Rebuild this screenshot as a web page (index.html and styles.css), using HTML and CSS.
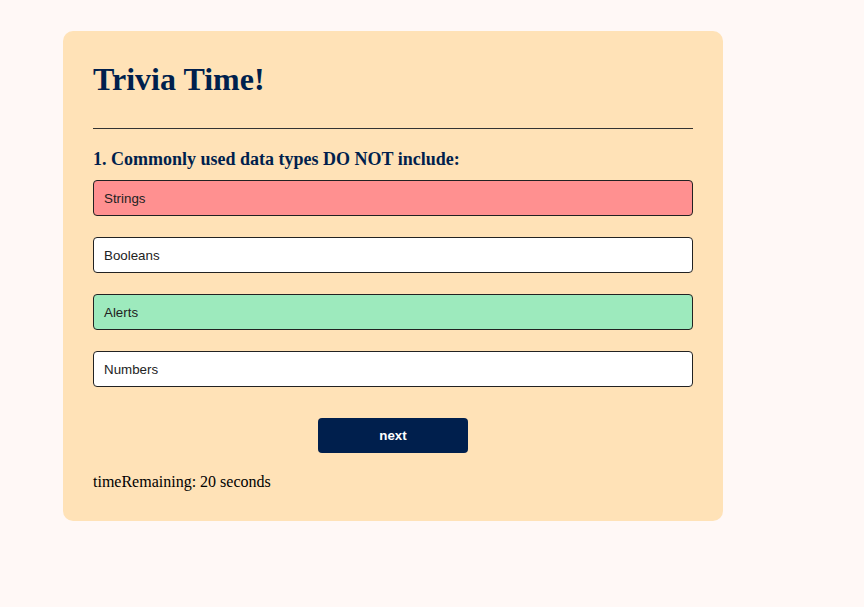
FILE: index.html
```html
<!DOCTYPE html>
<html>
<head>
<meta charset="utf-8">
<link rel="stylesheet" href="styles.css">
</head>
<body>
<div class="card">
  <h1 class="title">Trivia Time!</h1>
  <hr class="divider">
  <h3 class="question">1. Commonly used data types DO NOT include:</h3>
  <div class="choices">
    <button class="choice wrong">Strings</button>
    <button class="choice">Booleans</button>
    <button class="choice right">Alerts</button>
    <button class="choice">Numbers</button>
  </div>
  <div class="actions"><button class="next">next</button></div>
  <p class="timer">timeRemaining: 20 seconds</p>
</div>
</body>
</html>
```
FILE: styles.css
```css
html, body { margin: 0; }
body {
  background: #fff8f6;
  font-family: "Liberation Serif", "Times New Roman", serif;
  padding: 31px 0 0 63px;
  height: 607px;
  box-sizing: border-box;
}
.card {
  width: 660px;
  box-sizing: border-box;
  background: #ffe2b7;
  border-radius: 10px;
  padding: 30px;
}
.title {
  margin: 0 0 30px;
  font-size: 32px;
  line-height: 37px;
  color: #001f4d;
  font-weight: bold;
}
.divider {
  margin: 0 0 19px;
  border: none;
  border-top: 1px solid #333;
  height: 0;
}
.question {
  margin: 0 0 10px;
  font-size: 18px;
  line-height: 22px;
  color: #001f4d;
  font-weight: bold;
}
.choices {
  display: flex;
  flex-direction: column;
  gap: 21px;
}
.choice {
  height: 36px;
  box-sizing: border-box;
  border: 1px solid #222;
  border-radius: 4px;
  background: #fff;
  text-align: left;
  padding: 0 10px;
  font-family: "Liberation Sans", Arial, sans-serif;
  font-size: 13.33px;
  color: #222;
}
.choice.wrong { background: #ff9090; }
.choice.right { background: #9deabd; }
.actions {
  display: flex;
  justify-content: center;
  margin-top: 31px;
}
.next {
  width: 150px;
  height: 35px;
  border: none;
  border-radius: 4px;
  background: #001f4d;
  color: #fff;
  font-family: "Liberation Sans", Arial, sans-serif;
  font-size: 13.33px;
  font-weight: bold;
}
.timer {
  margin: 20px 0 0;
  font-size: 16px;
  line-height: 18px;
  color: #000;
}
```
